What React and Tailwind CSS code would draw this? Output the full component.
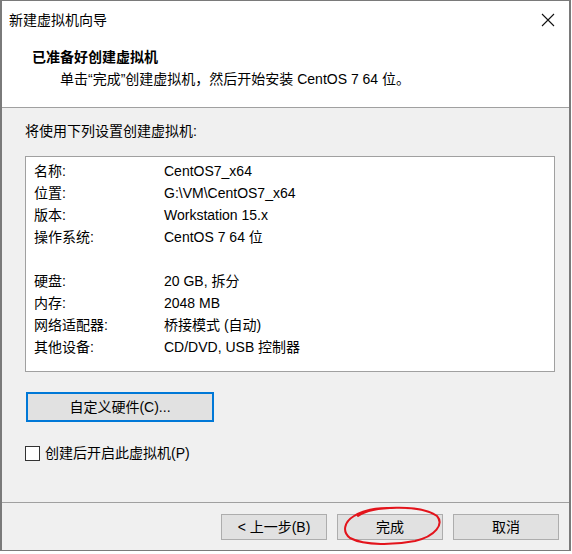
import React from 'react';

const font = { fontFamily: '"Liberation Sans", "Noto Sans CJK SC", sans-serif' };

const rows = [
  ['名称:', 'CentOS7_x64'],
  ['位置:', 'G:\\VM\\CentOS7_x64'],
  ['版本:', 'Workstation 15.x'],
  ['操作系统:', 'CentOS 7 64 位'],
  ['', ''],
  ['硬盘:', '20 GB, 拆分'],
  ['内存:', '2048 MB'],
  ['网络适配器:', '桥接模式 (自动)'],
  ['其他设备:', 'CD/DVD, USB 控制器'],
];

const App = () => {
  return (
    <div className="relative w-[572px] h-[554px] bg-white overflow-hidden text-black" style={font}>
      <div className="flex flex-col w-[571px] h-[551px] border-l-2 border-r-2 border-t border-b border-[#7a7a7a]">
        {/* Title bar */}
        <div className="flex items-center justify-between h-[38px] bg-white pl-[7px] pr-[14px]">
          <span className="text-[14px]">新建虚拟机向导</span>
          <svg width="14" height="14" viewBox="0 0 14 14">
            <path d="M1 1 L13 13 M13 1 L1 13" stroke="#111" strokeWidth="1.1" fill="none" />
          </svg>
        </div>

        {/* Header */}
        <div className="h-[69px] bg-white pt-[8px] pl-[30px] border-b border-[#a0a0a0]">
          <div className="text-[14px] leading-[20px] font-bold">已准备好创建虚拟机</div>
          <div className="text-[14px] leading-[20px] mt-[2px] pl-[28px]">
            单击“完成”创建虚拟机，然后开始安装 CentOS 7 64 位。
          </div>
        </div>

        {/* Body */}
        <div className="flex-1 flex flex-col bg-[#f0f0f0] pl-[23px] pt-[13px]">
          <div className="text-[14px] leading-[20px]">将使用下列设置创建虚拟机:</div>
          <div className="mt-[15px] w-[530px] h-[216px] bg-white border border-[#a0a0a0] pt-[3px] pl-[8px]">
            {rows.map(([k, v], i) => (
              <div key={i} className="flex h-[22px] leading-[22px] text-[14px]">
                <span className="w-[130px]">{k}</span>
                <span>{v}</span>
              </div>
            ))}
          </div>
          <button className="mt-[20px] ml-[1px] w-[188px] h-[30px] bg-[#e1e1e1] border-2 border-[#0078d7] text-[14px] leading-none">
            自定义硬件(C)...
          </button>
          <label className="mt-[21px] flex items-center gap-[5px] text-[14px]">
            <span className="w-[15px] h-[15px] bg-white border border-[#333]" />
            <span>创建后开启此虚拟机(P)</span>
          </label>
        </div>

        {/* Footer */}
        <div className="flex justify-end gap-[10px] h-[48px] bg-[#f0f0f0] border-t border-[#a0a0a0] pt-[11px] pr-[10px]">
          <button className="w-[106px] h-[26px] bg-[#e1e1e1] border border-[#adadad] text-[14px] leading-none">&lt; 上一步(B)</button>
          <button className="w-[106px] h-[26px] bg-[#e1e1e1] border border-[#adadad] text-[14px] leading-none">完成</button>
          <button className="w-[106px] h-[26px] bg-[#e1e1e1] border border-[#adadad] text-[14px] leading-none">取消</button>
        </div>
      </div>

      {/* Red hand-drawn annotation */}
      <svg className="absolute left-[340px] top-[502px]" width="106" height="46" viewBox="0 0 106 46">
        <path
          d="M18 14 C 32 4, 80 2, 97 14 C 104 22, 96 34, 75 39 C 55 43, 25 44, 10 36 C 2 30, 4 20, 14 14 C 22 9, 35 6, 47 6"
          stroke="#e3141c"
          strokeWidth="2"
          fill="none"
          strokeLinecap="round"
        />
      </svg>
    </div>
  );
};

export default App;
